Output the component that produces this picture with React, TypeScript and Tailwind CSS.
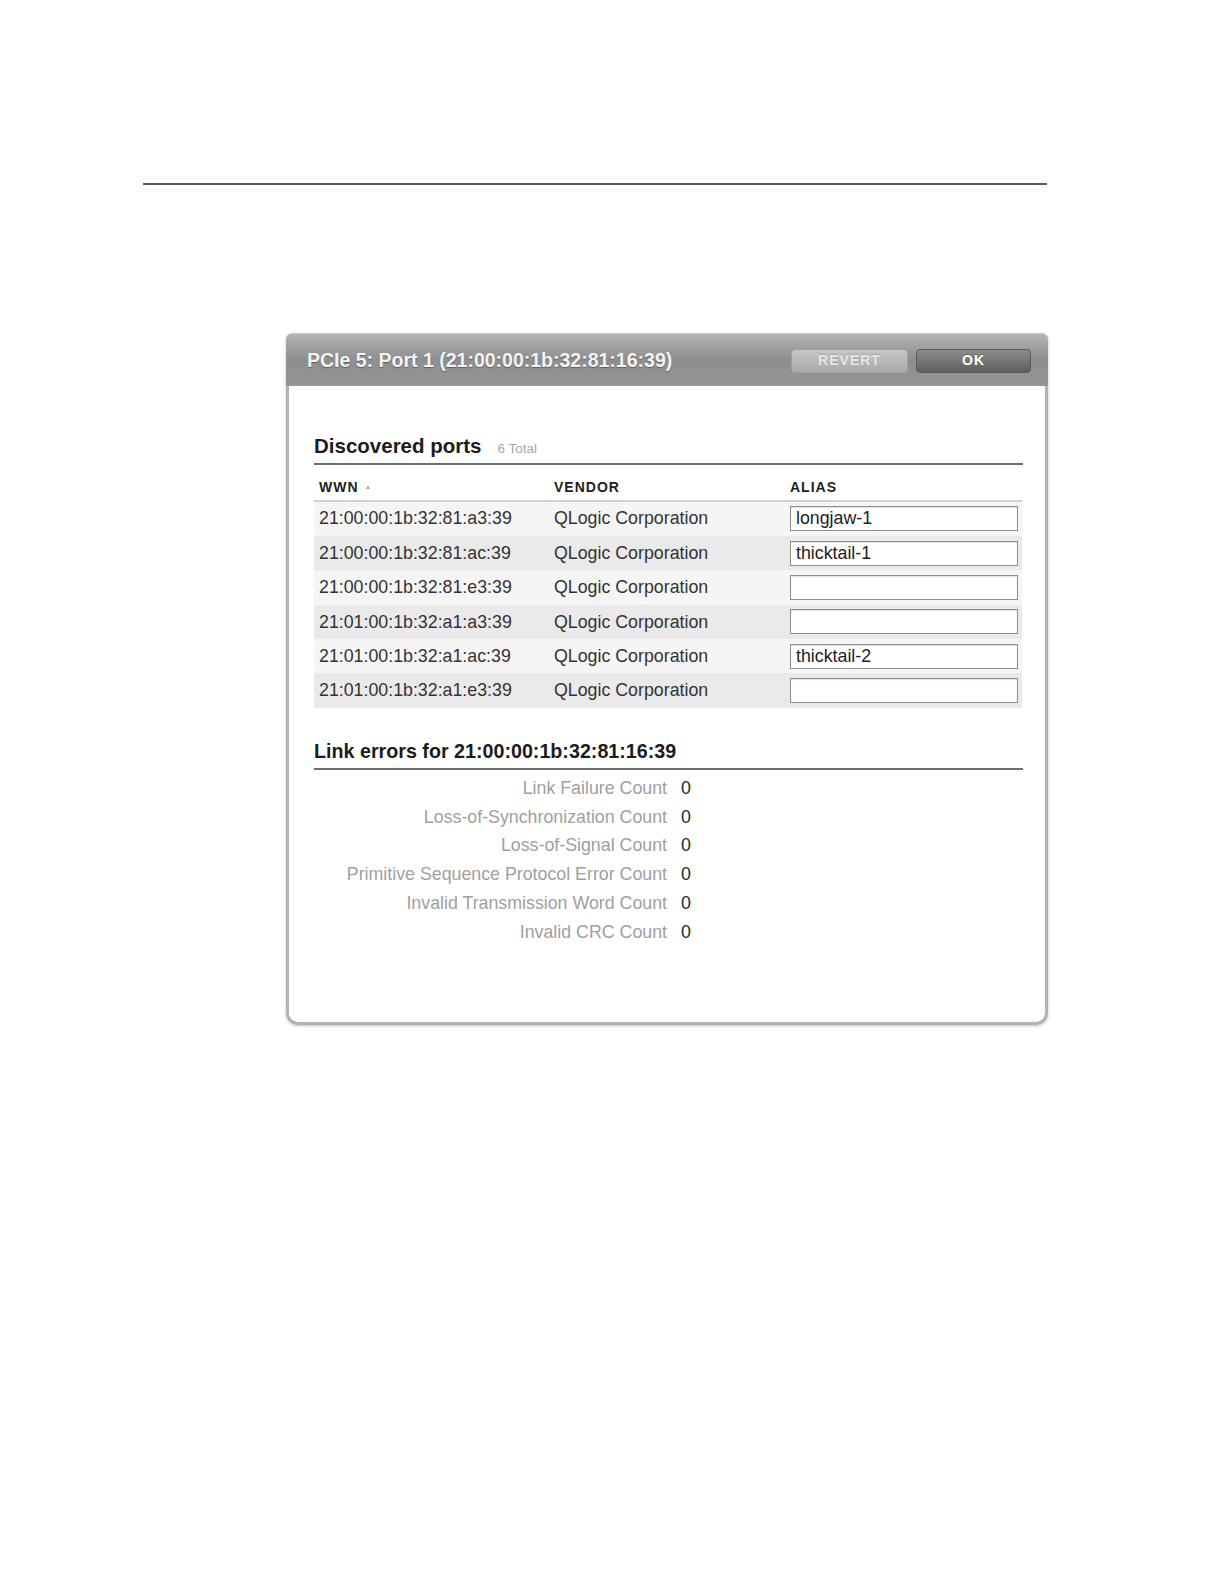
import React from "react";

const rows = [
  { wwn: "21:00:00:1b:32:81:a3:39", vendor: "QLogic Corporation", alias: "longjaw-1" },
  { wwn: "21:00:00:1b:32:81:ac:39", vendor: "QLogic Corporation", alias: "thicktail-1" },
  { wwn: "21:00:00:1b:32:81:e3:39", vendor: "QLogic Corporation", alias: "" },
  { wwn: "21:01:00:1b:32:a1:a3:39", vendor: "QLogic Corporation", alias: "" },
  { wwn: "21:01:00:1b:32:a1:ac:39", vendor: "QLogic Corporation", alias: "thicktail-2" },
  { wwn: "21:01:00:1b:32:a1:e3:39", vendor: "QLogic Corporation", alias: "" },
];

const errors = [
  "Link Failure Count",
  "Loss-of-Synchronization Count",
  "Loss-of-Signal Count",
  "Primitive Sequence Protocol Error Count",
  "Invalid Transmission Word Count",
  "Invalid CRC Count",
];

export default function App() {
  return (
    <div
      className="w-[1224px] h-[1584px] bg-white overflow-hidden"
      style={{ fontFamily: '"Liberation Sans", Arial, sans-serif' }}
    >
      <div className="pt-[183px] pl-[143px]">
        <div className="w-[904px] h-[1.5px] bg-[#5a5a5a]" />
      </div>

      <div className="ml-[286px] mt-[148px] w-[762px] rounded-t-[6px] rounded-b-[12px] shadow-[0_1px_3px_rgba(0,0,0,0.25)]">
        {/* Header */}
        <div className="h-[53px] flex items-center justify-between pl-[21px] pr-[17px] pt-[2px] rounded-t-[6px] bg-gradient-to-b from-[#b4b4b4] via-[#8e8e8e] to-[#969696] border-t border-[#cfcfcf]">
          <div className="text-[19.5px] font-bold text-[#f4f4f4] [text-shadow:0_1px_1px_rgba(0,0,0,0.35)]">
            PCIe 5: Port 1 (21:00:00:1b:32:81:16:39)
          </div>
          <div className="flex gap-[8px]">
            <div className="w-[117px] h-[24px] rounded-[4px] bg-gradient-to-b from-[#c6c6c6] to-[#a9a9a9] border border-[#a0a0a0] flex items-center justify-center text-[14px] font-bold tracking-[1px] text-[#e6e6e6] [text-shadow:0_-1px_0_rgba(0,0,0,0.15)]">
              REVERT
            </div>
            <div className="w-[115px] h-[24px] rounded-[4px] bg-gradient-to-b from-[#8c8c8c] to-[#5f5f5f] border border-[#5a5a5a] flex items-center justify-center text-[14px] font-bold tracking-[1px] text-white [text-shadow:0_-1px_0_rgba(0,0,0,0.3)]">
              OK
            </div>
          </div>
        </div>

        {/* Body */}
        <div className="bg-white border-x-[3px] border-b-[3px] border-[#b2b2b2] rounded-b-[12px] pl-[25px] pr-[22px] pt-[48px] pb-[75px]">
          <div className="flex items-baseline gap-[16px] h-[24px] leading-[24px]">
            <span className="text-[20.5px] font-bold text-[#1c1c1c]">Discovered ports</span>
            <span className="text-[13.5px] text-[#a8a8a8]">6 Total</span>
          </div>
          <div className="mt-[5px] h-[2px] bg-[#6e6e6e]" />

          {/* Table */}
          <div className="w-[708px]">
            <div className="h-[35px] flex items-end pb-[4px] leading-[18px] text-[14px] font-bold tracking-[1px] text-[#1e1e1e]">
              <div className="w-[240px] pl-[5px] flex items-center gap-[6px]">
                WWN <span className="text-[7px] text-[#aaaaaa]">▲</span>
              </div>
              <div className="w-[236px]">VENDOR</div>
              <div className="flex-1">ALIAS</div>
            </div>
            <div className="h-[2px] bg-[#d0d0d0]" />
            {rows.map((r, i) => (
              <div
                key={r.wwn}
                className={`h-[34.4px] flex items-center text-[17.8px] text-[#333333] ${
                  i % 2 === 0 ? "bg-[#f5f5f5]" : "bg-[#eaeaea]"
                }`}
              >
                <div className="w-[240px] pl-[5px]">{r.wwn}</div>
                <div className="w-[236px]">{r.vendor}</div>
                <div className="flex-1">
                  <div className="w-[228px] h-[25px] bg-white border border-[#8e8e8e] shadow-[inset_0_1px_1px_rgba(0,0,0,0.12)] flex items-center pl-[5px] text-[#1e1e1e]">
                    {r.alias}
                  </div>
                </div>
              </div>
            ))}
          </div>

          {/* Link errors */}
          <div className="mt-[31px] h-[24px] leading-[24px] text-[19.7px] font-bold text-[#1c1c1c]">
            Link errors for 21:00:00:1b:32:81:16:39
          </div>
          <div className="mt-[5px] h-[2px] bg-[#6e6e6e]" />
          <div className="pt-[4px]">
            {errors.map((e) => (
              <div key={e} className="h-[28.8px] flex items-center text-[17.8px]">
                <div className="w-[353px] text-right text-[#a0a0a0]">{e}</div>
                <div className="ml-[14px] text-[#2a2a2a]">0</div>
              </div>
            ))}
          </div>
        </div>
      </div>
    </div>
  );
}
